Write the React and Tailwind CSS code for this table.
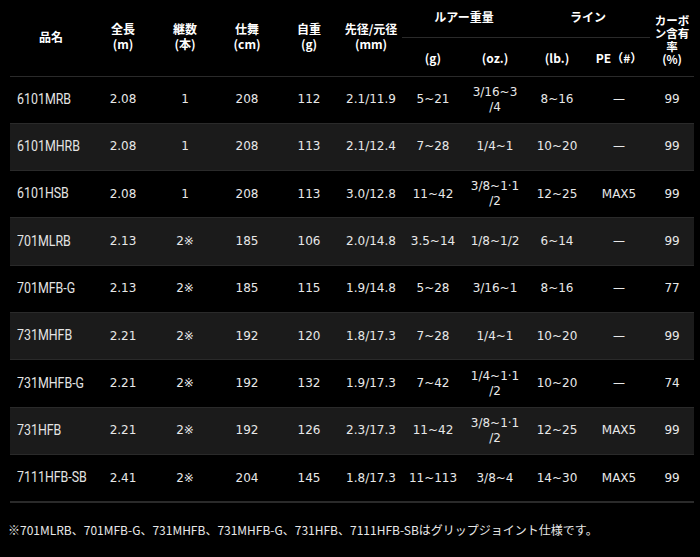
import React from 'react';

const rows = [
  ['6101MRB', '2.08', '1', '208', '112', '2.1/11.9', '5~21', ['3/16~3', '/4'], '8~16', '—', '99'],
  ['6101MHRB', '2.08', '1', '208', '113', '2.1/12.4', '7~28', ['1/4~1'], '10~20', '—', '99'],
  ['6101HSB', '2.08', '1', '208', '113', '3.0/12.8', '11~42', ['3/8~1·1', '/2'], '12~25', 'MAX5', '99'],
  ['701MLRB', '2.13', '2※', '185', '106', '2.0/14.8', '3.5~14', ['1/8~1/2'], '6~14', '—', '99'],
  ['701MFB-G', '2.13', '2※', '185', '115', '1.9/14.8', '5~28', ['3/16~1'], '8~16', '—', '77'],
  ['731MHFB', '2.21', '2※', '192', '120', '1.8/17.3', '7~28', ['1/4~1'], '10~20', '—', '99'],
  ['731MHFB-G', '2.21', '2※', '192', '132', '1.9/17.3', '7~42', ['1/4~1·1', '/2'], '10~20', '—', '74'],
  ['731HFB', '2.21', '2※', '192', '126', '2.3/17.3', '11~42', ['3/8~1·1', '/2'], '12~25', 'MAX5', '99'],
  ['7111HFB-SB', '2.41', '2※', '204', '145', '1.8/17.3', '11~113', ['3/8~4'], '14~30', 'MAX5', '99'],
];

const jp = "font-['Noto_Sans_CJK_JP',sans-serif]";
const num = "font-['DejaVu_Sans','Noto_Sans_CJK_JP',sans-serif]";

export default function App() {
  return (
    <div className="w-[700px] h-[557px] bg-black text-[#e8e8e8] overflow-hidden">
      <div className="pl-[10px]">
        <table className="table-fixed border-collapse w-[684px]">
          <colgroup>
            <col className="w-[82px]" />
            <col className="w-[62px]" />
            <col className="w-[62px]" />
            <col className="w-[62px]" />
            <col className="w-[62px]" />
            <col className="w-[62px]" />
            <col className="w-[62px]" />
            <col className="w-[62px]" />
            <col className="w-[62px]" />
            <col className="w-[62px]" />
            <col className="w-[44px]" />
          </colgroup>
          <thead className={`${jp} font-bold text-[12px] leading-[15px] text-white`}>
            <tr className="h-[37px]">
              <th rowSpan={2} className="align-middle pb-[2px]">品名</th>
              <th rowSpan={2} className="align-middle pb-[4px]">全長<br />(m)</th>
              <th rowSpan={2} className="align-middle pb-[4px]">継数<br />(本)</th>
              <th rowSpan={2} className="align-middle pb-[4px]">仕舞<br />(cm)</th>
              <th rowSpan={2} className="align-middle pb-[4px]">自重<br />(g)</th>
              <th rowSpan={2} className="align-middle pb-[4px]">先径/元径<br />(mm)</th>
              <th colSpan={2} className="align-middle pb-[4px] border-b border-[#2a2a2a]">ルアー重量</th>
              <th colSpan={2} className="align-middle pb-[4px] border-b border-[#2a2a2a]">ライン</th>
              <th rowSpan={2} className="align-middle text-[11.5px] leading-[13px] pt-[4px]">カーボ<br />ン含有<br />率<br />(%)</th>
            </tr>
            <tr className="h-[39px]">
              <th className="align-middle pt-[2px]">(g)</th>
              <th className="align-middle pt-[2px]">(oz.)</th>
              <th className="align-middle pt-[2px]">(lb.)</th>
              <th className="align-middle pt-[2px]">PE（#）</th>
            </tr>
          </thead>
          <tbody className={`${num} text-[12px] leading-[15px]`}>
            {rows.map((r, i) => (
              <tr
                key={r[0]}
                className={`h-[47.33px] border-t border-[#2a2a2a] ${i % 2 === 1 ? 'bg-[#1b1b1b]' : 'bg-black'} ${i === rows.length - 1 ? 'border-b-2' : ''}`}
              >
                <td className="pl-[7px] text-left whitespace-nowrap">
                  <span className="inline-block origin-left scale-x-[0.8] font-['Roboto',sans-serif] text-[15.5px] text-[#e4e4e4]">
                    {r[0]}
                  </span>
                </td>
                {r.slice(1).map((c, j) => (
                  <td key={j} className="text-center align-middle">
                    {Array.isArray(c) ? c.map((part, k) => (
                      <React.Fragment key={k}>
                        {k > 0 && <br />}
                        {part}
                      </React.Fragment>
                    )) : c}
                  </td>
                ))}
              </tr>
            ))}
          </tbody>
        </table>
      </div>
      <p className={`${jp} text-[12px] text-[#e8e8e8] pl-[8px] mt-[18px]`}>
        ※701MLRB、701MFB-G、731MHFB、731MHFB-G、731HFB、7111HFB-SBはグリップジョイント仕様です。
      </p>
    </div>
  );
}
